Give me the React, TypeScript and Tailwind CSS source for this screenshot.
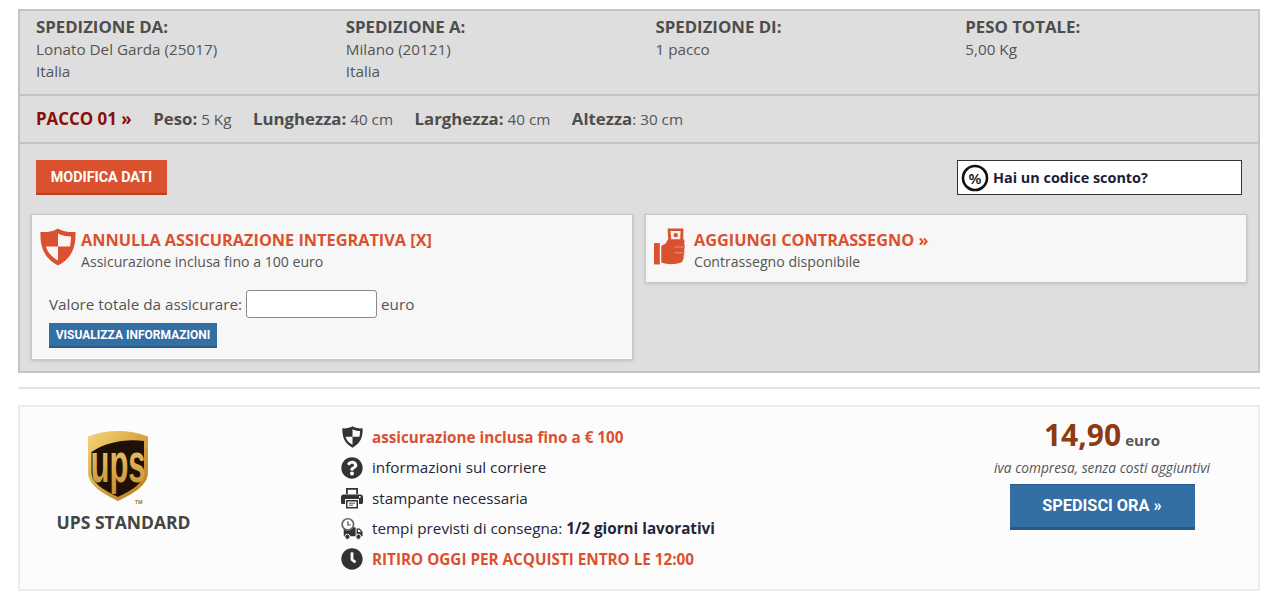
import { FaClock, FaQuestionCircle } from 'react-icons/fa'

const sans = "font-['Open_Sans',sans-serif]"

function ShieldIcon({ className, main, light }: { className: string; main: string; light: string }) {
  return (
    <svg viewBox="0 0 36 38" className={className}>
      <path
        d="M18 0.5C23 3.5 29 4.5 35.5 4C36 17 33 30 18 37.5C3 30 0 17 0.5 4C7 4.5 13 3.5 18 0.5Z"
        fill={main}
      />
      <path d="M18 5.5C21.5 7.5 26 8.5 31 8.5C31 11.5 30.8 15 30 18.5H18V5.5Z" fill={light} />
      <path d="M18 18.5H6C7.5 24 11 28.5 18 32.5V18.5Z" fill={light} />
    </svg>
  )
}

function MoneyHandIcon() {
  return (
    <svg viewBox="0 0 32 40" className="h-[40px] w-[31px] shrink-0">
      <rect x="0" y="16" width="6" height="22" fill="#d9512f" />
      <path
        d="M7.500 19L12 16.500L14.500 12H30C31.500 12 32 14 31 16C32 18 32 21 31 23C31.800 25 31.500 27.500 30.500 29C31 31.500 30 34.500 28 36C21 38.500 14 38 7.500 36Z"
        fill="#d9512f"
      />
      <path d="M14 1H30.500L30 15H15Z" fill="#d9512f" />
      <path d="M17 3.500H27.500L27 12H17.800Z" fill="#fdf0ec" />
      <circle cx="22.400" cy="7.800" r="2.200" fill="#d9512f" />
      <path d="M21 20H31M21 26H31" stroke="#f0a893" strokeWidth="0.8" />
    </svg>
  )
}

function PercentIcon() {
  return (
    <svg viewBox="0 0 28 28" className="h-7 w-7 shrink-0">
      <circle cx="14" cy="14" r="12" fill="#fff" stroke="#111" strokeWidth="2.600" />
      <text
        x="14"
        y="19.500"
        textAnchor="middle"
        fontSize="15"
        fontWeight="600"
        fontFamily="'Open Sans', sans-serif"
        fill="#111"
      >
        %
      </text>
    </svg>
  )
}

function PrinterIcon() {
  return (
    <svg viewBox="0 0 22 22" className="h-[22px] w-[22px]">
      <path d="M5 1H17V7H15.200V2.800H6.800V7H5Z" fill="#333" />
      <path d="M2.500 7.500H19.500C20.900 7.500 22 8.600 22 10V15.500C22 16.300 21.300 17 20.500 17H18V12H4V17H1.500C0.700 17 0 16.300 0 15.500V10C0 8.600 1.100 7.500 2.500 7.500Z" fill="#333" />
      <circle cx="18.800" cy="10" r="1" fill="#fcfcfc" />
      <path d="M5 13H17V21.500H5Z" fill="#333" />
      <path d="M6.500 14.500H15.500V20H6.500Z" fill="#fcfcfc" />
      <path d="M8 16.200H14M8 18.200H12" stroke="#555" strokeWidth="1" />
    </svg>
  )
}

function TruckClockIcon() {
  return (
    <svg viewBox="0 0 24 24" className="h-[24px] w-[24px]">
      <rect x="3" y="10" width="13" height="10" rx="1" fill="#333" />
      <path d="M17 11.500H20.500L23.500 15V20H17Z" fill="#333" />
      <path d="M18.500 12.800H20L21.800 15.200H18.500Z" fill="#fcfcfc" />
      <circle cx="7.500" cy="7" r="6.200" fill="#fcfcfc" stroke="#666" strokeWidth="1.800" />
      <path d="M7.500 3.500V7.500H10.500" fill="none" stroke="#666" strokeWidth="1.500" />
      <circle cx="7" cy="20.500" r="2.800" fill="#333" stroke="#fcfcfc" strokeWidth="1" />
      <circle cx="19" cy="20.500" r="2.800" fill="#333" stroke="#fcfcfc" strokeWidth="1" />
    </svg>
  )
}

function UpsLogo() {
  return (
    <svg viewBox="0 0 60 74" className="h-[74px] w-[60px]">
      <defs>
        <linearGradient id="upsGold" x1="0" y1="0" x2="1" y2="1">
          <stop offset="0" stopColor="#f6d67a" />
          <stop offset="0.5" stopColor="#d9a441" />
          <stop offset="1" stopColor="#b07a22" />
        </linearGradient>
        <linearGradient id="upsText" x1="0" y1="0" x2="0" y2="1">
          <stop offset="0" stopColor="#f3cf75" />
          <stop offset="1" stopColor="#c98f2e" />
        </linearGradient>
      </defs>
      <path
        d="M30 1C40 1 50 2.500 60 6.500V42C60 56 44 64 30 71C16 64 0 56 0 42V6.500C10 2.500 20 1 30 1Z"
        fill="url(#upsGold)"
      />
      <path
        d="M56 11V42C56 54 42 61 30 67C18 61 3.500 54 3.500 42V22C18 12 38 8.500 56 11Z"
        fill="#1f1005"
      />
      <text
        transform="translate(30 52) scale(1 1.800)"
        textAnchor="middle"
        fontSize="31"
        fontWeight="700"
        fontFamily="'Liberation Sans', sans-serif"
        fill="url(#upsText)"
      >
        ups
      </text>
      <text x="47" y="73.500" fontSize="5" fontWeight="700" fontFamily="'Open Sans', sans-serif" fill="#9a7a3a">
        TM
      </text>
    </svg>
  )
}

function Route({ title, lines }: { title: string; lines: string[] }) {
  return (
    <div className="w-[309.750px] shrink-0">
      <h3 className="text-[16.800px] font-bold leading-[22px] text-[#4d4d4d]">{title}</h3>
      {lines.map((line) => (
        <p key={line} className="text-[15.250px] leading-[22px] text-[#555]">
          {line}
        </p>
      ))}
    </div>
  )
}

function Measure({ label, value, colon }: { label: string; value: string; colon?: string }) {
  return (
    <span className="text-[15.250px] text-[#555]">
      <b className="text-[16.800px] text-[#4d4d4d]">{label}</b>
      {colon} {value}
    </span>
  )
}

export default function App() {
  return (
    <div className={`${sans} min-h-[603px] bg-white pl-[18px] pr-5 pt-[9px]`}>
      {/* Shipment summary */}
      <section className="border-2 border-[#c4c4c4] bg-[#dedede]">
        <div className="flex h-[85px] border-b-2 border-[#c4c4c4] pl-4 pt-[5px]">
          <Route title="SPEDIZIONE DA:" lines={['Lonato Del Garda (25017)', 'Italia']} />
          <Route title="SPEDIZIONE A:" lines={['Milano (20121)', 'Italia']} />
          <Route title="SPEDIZIONE DI:" lines={['1 pacco']} />
          <Route title="PESO TOTALE:" lines={['5,00 Kg']} />
        </div>

        <div className="flex h-12 items-center gap-[21.500px] border-b-2 border-[#c4c4c4] pl-4">
          <span className="text-[16.900px] font-bold text-[#8a0f0a]">PACCO 01 »</span>
          <Measure label="Peso:" value="5 Kg" />
          <Measure label="Lunghezza:" value="40 cm" />
          <Measure label="Larghezza:" value="40 cm" />
          <Measure label="Altezza" colon=":" value="30 cm" />
        </div>

        <div className="h-[227px] px-[11px] pt-[16px]">
          <div className="flex justify-between pl-[5px] pr-[5px]">
            <button className="h-[35px] w-[131px] border-b-2 border-[#b8401f] bg-[#d9512f] pt-0.5 font-['Roboto',sans-serif] text-[14.300px] font-bold text-white">
              MODIFICA DATI
            </button>
            <div className="flex h-[35px] w-[285px] items-center gap-1 border border-[#333] bg-white pl-[3px] text-[14.400px] font-bold text-[#1b2036]">
              <PercentIcon />
              Hai un codice sconto?
            </div>
          </div>

          <div className="mt-[19px] flex items-start gap-3">
            <div className="h-[146px] w-[602px] border border-[#c8c8c8] bg-[#f7f7f7] pl-[8px] pt-[13px] shadow-[0_1px_3px_rgba(0,0,0,0.15)]">
              <div className="flex gap-[5px]">
                <ShieldIcon className="h-[38px] w-9 shrink-0" main="#d9512f" light="#fdf4f1" />
                <div>
                  <h4 className="text-[16.300px] font-bold leading-[24px] text-[#d9512f]">
                    ANNULLA ASSICURAZIONE INTEGRATIVA [X]
                  </h4>
                  <p className="text-[14.100px] leading-[20px] text-[#555]">Assicurazione inclusa fino a 100 euro</p>
                </div>
              </div>
              <div className="mt-[18px] flex items-center gap-1 pl-[9px] text-[15.250px] text-[#555]">
                <label>Valore totale da assicurare:</label>
                <input className="h-7 w-[131px] rounded-[3px] border border-[#8a8a8a] bg-white" />
                <span>euro</span>
              </div>
              <button className="ml-[9px] mt-[5px] h-[25px] w-[168px] border-b-2 border-[#275a88] bg-[#336ea5] font-['Roboto',sans-serif] text-[12px] font-bold text-white">
                VISUALIZZA INFORMAZIONI
              </button>
            </div>

            <div className="flex h-[69px] w-[602px] gap-[9px] border border-[#c8c8c8] bg-[#f7f7f7] pl-[8px] pt-[12px] shadow-[0_1px_3px_rgba(0,0,0,0.15)]">
              <MoneyHandIcon />
              <div className="pt-px">
                <h4 className="text-[16.300px] font-bold leading-[24px] text-[#d9512f]">AGGIUNGI CONTRASSEGNO »</h4>
                <p className="text-[14.100px] leading-[20px] text-[#555]">Contrassegno disponibile</p>
              </div>
            </div>
          </div>
        </div>
      </section>

      <hr className="mb-4 mt-[14px] border-t-2 border-[#e2e2e2]" />

      {/* Courier offer */}
      <section className="flex h-[186px] border-2 border-[#ececec] bg-[#fcfcfc]">
        <div className="flex w-[207px] shrink-0 flex-col items-center pt-[23px]">
          <div className="mr-[11px] h-[74px]">
            <UpsLogo />
          </div>
          <span className="mt-[5px] text-[17.500px] font-bold text-[#444]">UPS STANDARD</span>
        </div>

        <ul className="w-[736px] shrink-0 pl-[114px] pt-[15px] text-[15.250px] text-[#23263a]">
          <li className="flex h-[30.500px] items-center gap-[9px] font-bold text-[#d9512f]">
            <span className="flex w-[22px] justify-center">
              <ShieldIcon className="h-[22px] w-[21px]" main="#333" light="#fcfcfc" />
            </span>
            assicurazione inclusa fino a € 100
          </li>
          <li className="flex h-[30.500px] items-center gap-[9px]">
            <span className="flex w-[22px] justify-center">
              <FaQuestionCircle className="h-[22px] w-[22px] text-[#333]" />
            </span>
            informazioni sul corriere
          </li>
          <li className="flex h-[30.500px] items-center gap-[9px]">
            <span className="flex w-[22px] justify-center">
              <PrinterIcon />
            </span>
            stampante necessaria
          </li>
          <li className="flex h-[30.500px] items-center gap-[9px]">
            <span className="flex w-[22px] justify-center">
              <TruckClockIcon />
            </span>
            <span>
              tempi previsti di consegna: <b>1/2 giorni lavorativi</b>
            </span>
          </li>
          <li className="flex h-[30.500px] items-center gap-[9px] font-bold text-[#d9512f]">
            <span className="flex w-[22px] justify-center">
              <FaClock className="h-[22px] w-[22px] text-[#333]" />
            </span>
            RITIRO OGGI PER ACQUISTI ENTRO LE 12:00
          </li>
        </ul>

        <div className="flex w-[278px] flex-col items-center pt-[5px]">
          <div className="leading-[46px] text-[#555]">
            <span className="text-[30px] font-bold text-[#8e3a12]">14,90</span>{' '}
            <span className="text-[15px] font-bold">euro</span>
          </div>
          <p className="-mt-[3px] text-[13.700px] italic leading-[16px] text-[#555]">iva compresa, senza costi aggiuntivi</p>
          <button className="mt-[8px] h-[46px] w-[185px] border-b-[3px] border-t border-[#275a88] bg-[#336ea5] font-['Roboto',sans-serif] text-[16.300px] font-bold text-white">
            SPEDISCI ORA »
          </button>
        </div>
      </section>
    </div>
  )
}
